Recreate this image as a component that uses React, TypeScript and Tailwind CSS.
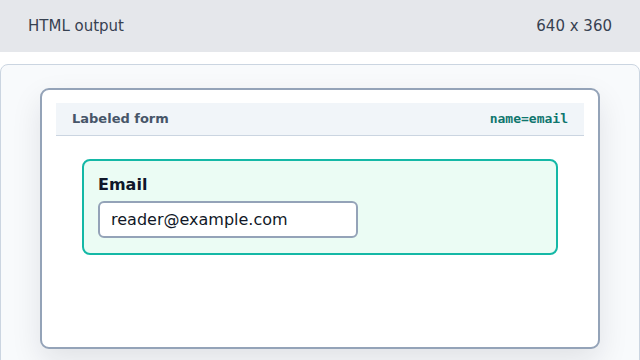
const App = () => {
  return (
    <div className="w-[640px] h-[360px] overflow-hidden bg-white font-['DejaVu_Sans',sans-serif]">
      <header className="h-[52px] bg-[#e5e7eb] flex items-center justify-between px-[28px] text-[15px] text-[#374151]">
        <span>HTML output</span>
        <span>640 x 360</span>
      </header>
      <section className="mt-[12px] h-[320px] rounded-t-lg border border-[#cbd5e1] bg-[#f8fafc] px-[39px] pt-[23px]">
        <div className="h-[261px] rounded-[9px] border-2 border-[#94a3b8] bg-white px-[14px] pt-[13px] shadow-[0_12px_30px_rgba(15,23,42,0.10)]">
          <div className="h-[33px] flex items-center justify-between border-b border-[#cbd5e1] bg-[#f1f5f9] px-[16px]">
            <span className="text-[13px] font-bold text-[#475569]">Labeled form</span>
            <span className="font-['DejaVu_Sans_Mono',monospace] text-[13px] font-bold text-[#0f766e]">
              name=email
            </span>
          </div>
          <div className="mx-[26px] mt-[23px] h-[96px] rounded-[8px] border-2 border-[#14b8a6] bg-[#ebfcf4] px-[14px] pt-[14px]">
            <label className="block text-[16px] font-bold leading-[20px] text-[#0f172a]">Email</label>
            <div className="mt-[6px] w-[260px] h-[37px] flex items-center rounded-[6px] border-2 border-[#94a3b8] bg-white px-[11px] text-[16px] text-[#111827]">
              reader@example.com
            </div>
          </div>
        </div>
      </section>
    </div>
  );
};

export default App;
